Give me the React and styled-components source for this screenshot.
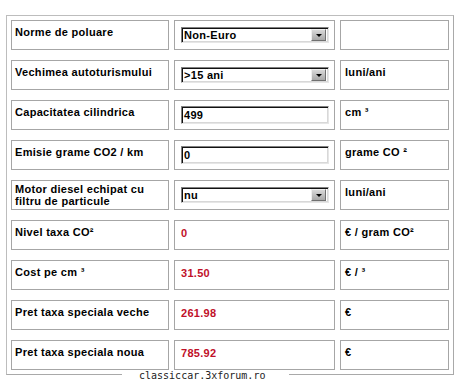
import React from "react";
import styled, { createGlobalStyle } from "styled-components";

const Global = createGlobalStyle`
  html, body { margin: 0; padding: 0; background: #fff; }
  body { font-family: "Liberation Sans", Arial, sans-serif; }
`;

const Page = styled.div`
  position: relative;
  width: 463px;
  height: 386px;
  padding: 15px 0 0 6px;
  box-sizing: border-box;
`;

const Frame = styled.div`
  width: 448px;
  box-sizing: border-box;
  border: 1px solid #bdbdbd;
  border-right-color: #a9a9a9;
  border-bottom-color: #a9a9a9;
  padding: 4px;
  display: grid;
  grid-template-columns: 158px 161px 109px;
  grid-auto-rows: 30px;
  column-gap: 5px;
  row-gap: 10px;
`;

const Cell = styled.div`
  box-sizing: border-box;
  border: 1px solid #a6a6a6;
  background: #fff;
  display: flex;
  flex-direction: column;
  justify-content: ${(p) => (p.$center ? "center" : "flex-start")};
  padding: ${(p) => (p.$center ? "0 0 0 6px" : `${p.$top ?? 5}px 3px 0 ${p.$left ?? 3}px`)};
  font-size: 11px;
  line-height: 13px;
  letter-spacing: 0.3px;
  font-weight: bold;
  color: ${(p) => (p.$red ? "#bf1029" : "#000")};
  white-space: nowrap;
`;

const Label = styled.span`
  line-height: ${(p) => (p.$multi ? "12px" : "13px")};
  white-space: normal;
`;

const Sunken = styled.div`
  box-sizing: border-box;
  width: 148px;
  height: ${(p) => p.$h}px;
  border: 1px solid;
  border-color: #808080 #e6e6e6 #e6e6e6 #808080;
  box-shadow: inset 1px 1px 0 #111, inset -1px -1px 0 #d8d8d8;
  background: #fff;
  display: flex;
  align-items: center;
  justify-content: space-between;
  padding: 0 1px 0 2px;
  font-size: 11px;
  letter-spacing: 0.3px;
  font-weight: bold;
  color: #000;
`;

const DropBtn = styled.div`
  box-sizing: border-box;
  width: 15px;
  height: 12px;
  margin-right: 1px;
  background: linear-gradient(#d8d8d8, #a8a8a8);
  border: 1px solid;
  border-color: #eeeeee #707070 #707070 #eeeeee;
  display: flex;
  align-items: center;
  justify-content: center;
`;

const Arrow = styled.span`
  width: 0;
  height: 0;
  border-left: 3px solid transparent;
  border-right: 3px solid transparent;
  border-top: 3px solid #000;
  margin-top: 1px;
`;

const Watermark = styled.div`
  position: absolute;
  left: 122px;
  top: 370px;
  width: 167px;
  height: 16px;
  background: #fff;
  box-sizing: border-box;
  padding-left: 17px;
  font-family: "DejaVu Sans Mono", "Liberation Mono", monospace;
  font-size: 10px;
  line-height: 11px;
  color: #222;
`;

const Select = ({ value }) => (
  <Sunken $h={16}>
    <span>{value}</span>
    <DropBtn>
      <Arrow />
    </DropBtn>
  </Sunken>
);

const Input = ({ value }) => (
  <Sunken $h={18}>
    <span>{value}</span>
  </Sunken>
);

const rows = [
  { label: "Norme de poluare", field: <Select value="Non-Euro" />, unit: "" },
  { label: "Vechimea autoturismului", field: <Select value=">15 ani" />, unit: "luni/ani" },
  { label: "Capacitatea cilindrica", field: <Input value="499" />, unit: "cm ³" },
  { label: "Emisie grame CO2 / km", field: <Input value="0" />, unit: "grame CO ²" },
  { label: "Motor diesel echipat cu filtru de particule", multi: true, field: <Select value="nu" />, unit: "luni/ani" },
  { label: "Nivel taxa CO²", value: "0", unit: "€ / gram CO²" },
  { label: "Cost pe cm ³", value: "31.50", unit: "€ / ³" },
  { label: "Pret taxa speciala veche", value: "261.98", unit: "€" },
  { label: "Pret taxa speciala noua", value: "785.92", unit: "€" },
];

export default function App() {
  return (
    <Page>
      <Global />
      <Frame>
        {rows.map((r) => (
          <React.Fragment key={r.label}>
            <Cell $top={r.multi ? 2 : 5}>
              <Label $multi={r.multi}>{r.label}</Label>
            </Cell>
            {r.field ? (
              <Cell $center>{r.field}</Cell>
            ) : (
              <Cell $red $left={6} $top={6}>{r.value}</Cell>
            )}
            <Cell $left={4}>{r.unit}</Cell>
          </React.Fragment>
        ))}
      </Frame>
      <Watermark>classiccar.3xforum.ro</Watermark>
    </Page>
  );
}
